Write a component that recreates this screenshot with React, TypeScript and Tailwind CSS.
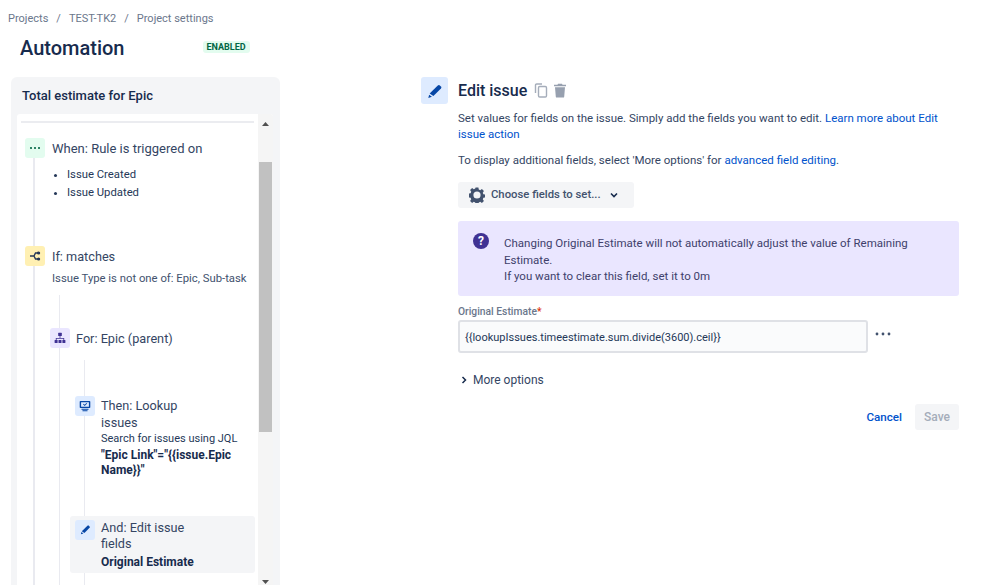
import React from "react";

const Pencil = ({ size = 14, color = "#0747a6" }: { size?: number; color?: string }) => (
  <svg width={size} height={size} viewBox="0 0 24 24" fill={color}>
    <path d="M16.2 3.6a2.2 2.2 0 0 1 3.1 0l1.6 1.6a2.2 2.2 0 0 1 0 3.1L9.6 19.6 4 15.8z" />
    <path d="M3.2 17.6 7.4 20.8 2 22.4z" />
  </svg>
);

const Chevron = ({ className }: { className?: string }) => (
  <svg className={className} width="10" height="10" viewBox="0 0 10 10" fill="none" stroke="#172b4d" strokeWidth="1.6">
    <path d="M2 3.5 5 6.5 8 3.5" />
  </svg>
);

function IconTile({ bg, children }: { bg: string; children: React.ReactNode }) {
  return (
    <div className={`flex h-5 w-5 shrink-0 items-center justify-center rounded-[3px] ${bg}`}>{children}</div>
  );
}

function Gear() {
  return (
    <svg width="16" height="16" viewBox="0 0 16 16" fill="#42526e">
      <path
        fillRule="evenodd"
        d="M6.6.6h2.800l.4 2 1.400.6 1.700-1.100 2 2-1.100 1.700.6 1.400 2 .4v2.800l-2 .4-.6 1.400 1.100 1.700-2 2-1.700-1.100-1.400.6-.4 2H6.600l-.4-2-1.400-.6-1.700 1.100-2-2 1.100-1.700-.6-1.400-2-.4V6.600l2-.4.6-1.400-1.100-1.700 2-2 1.700 1.100 1.400-.6zM8 4.400a3.600 3.600 0 1 0 0 7.200 3.600 3.600 0 0 0 0-7.200z"
      />
    </svg>
  );
}

function RuleTree() {
  return (
    <div className="relative pl-2 pt-[15px] text-[#253858]">
      <div className="absolute left-[16px] top-[35px] h-[500px] w-[2px] bg-[#e9eaf0]" />
      <div className="relative flex h-5 items-center gap-[7px]">
        <IconTile bg="bg-[#e3fcef]">
          <svg width="12" height="4" viewBox="0 0 12 4" fill="#006644">
            <circle cx="2" cy="2" r="1.1" />
            <circle cx="6" cy="2" r="1.1" />
            <circle cx="10" cy="2" r="1.1" />
          </svg>
        </IconTile>
        <span className="mt-[2px] text-[13px] text-[#344563]">When: Rule is triggered on</span>
      </div>
      <ul className="relative mt-[8px] ml-[27px] list-disc pl-0 text-[11.3px] leading-[18px] text-[#253858]">
        <li className="ml-[15px] pl-0">Issue Created</li>
        <li className="ml-[15px] pl-0">Issue Updated</li>
      </ul>
      <div className="relative mt-[44px] flex h-5 items-center gap-[7px]">
        <IconTile bg="bg-[#fff0b3]">
          <svg width="12" height="12" viewBox="0 0 12 12" fill="none" stroke="#253858" strokeWidth="1.4">
            <path d="M1 6h4M9 3H6.5L5 6l1.5 3H9" />
            <circle cx="9.6" cy="3" r="0.9" fill="#253858" />
            <circle cx="9.6" cy="9" r="0.9" fill="#253858" />
          </svg>
        </IconTile>
        <span className="mt-[2px] text-[12.7px] text-[#344563]">If: matches</span>
      </div>
      <p className="relative mt-[4px] ml-[27px] whitespace-nowrap text-[11.3px] leading-[18px] text-[#42526e]">
        Issue Type is not one of: Epic, Sub-task
      </p>
      <div className="relative ml-[25px] mt-[40px]">
        <div className="absolute left-[9px] top-[-33px] h-[300px] w-[1px] bg-[#e9eaf0]" />
        <div className="relative flex h-5 items-center gap-[6px]">
          <IconTile bg="bg-[#eae6ff]">
            <svg width="12" height="12" viewBox="0 0 12 12" fill="#403294">
              <rect x="4.2" y="0.8" width="3.6" height="3.2" rx="0.5" />
              <rect x="0.6" y="8" width="3" height="3" rx="0.5" />
              <rect x="4.5" y="8" width="3" height="3" rx="0.5" />
              <rect x="8.4" y="8" width="3" height="3" rx="0.5" />
              <path d="M5.6 4h.8v2h3.8v2h-.8V6.8H2.6V8h-.8V6h3.8z" />
            </svg>
          </IconTile>
          <span className="mt-[2px] text-[12.7px] text-[#344563]">For: Epic (parent)</span>
        </div>
        <div className="relative ml-[25px] mt-[48px]">
          <div className="absolute left-[9px] top-[-36px] h-[300px] w-[1px] bg-[#e9eaf0]" />
          <div className="relative flex items-start gap-[6px]">
            <IconTile bg="bg-[#deebff]">
              <svg width="12" height="12" viewBox="0 0 12 12" fill="#0747a6">
                <path d="M1.5 1h9a.8.8 0 0 1 .8.8v5.4a.8.8 0 0 1-.8.8h-9a.8.8 0 0 1-.8-.8V1.800A.8.8 0 0 1 1.500 1zm.6 1.300v4.400h7.800V2.300z" />
                <path d="M4 4.300l.7-.6 1 1 1.800-1.800.7.600-2.500 2.500zM2.500 8.800h7v1h-7zM3.500 10.300h5v1h-5z" />
              </svg>
            </IconTile>
            <div className="mt-[1px] w-[140px]">
              <div className="text-[12.7px] leading-[17px] text-[#344563]">
                Then: Lookup
                <br />
                issues
              </div>
              <div className="whitespace-nowrap text-[11px] leading-[15.5px] text-[#253858]">Search for issues using JQL</div>
              <div className="mt-[1px] text-[12px] font-bold leading-[15.5px] text-[#172b4d]">
                {'"Epic Link"="{{issue.Epic Name}}"'}
              </div>
            </div>
          </div>
          <div className="relative ml-[-5px] mt-[37px] flex h-[57px] w-[185px] items-start gap-[6px] rounded-[3px] bg-[#f4f5f7] pl-[5px] pt-[4px]">
            <IconTile bg="bg-[#deebff]">
              <Pencil size={11} />
            </IconTile>
            <div className="w-[100px]">
              <div className="text-[12.7px] leading-[16px] text-[#344563]">
                And: Edit issue
                <br />
                fields
              </div>
              <div className="mt-[2px] whitespace-nowrap text-[12px] font-bold leading-[16px] text-[#172b4d]">Original Estimate</div>
            </div>
          </div>
          <div className="relative mt-[6px] h-px" />
        </div>
      </div>
    </div>
  );
}

function Scrollbar() {
  return (
    <div className="flex w-[15px] shrink-0 flex-col items-center bg-[#f5f5f5]">
      <div className="flex h-[48px] w-full justify-center pt-[8px]">
        <svg width="7" height="4" viewBox="0 0 7 4" fill="#505050">
          <path d="M3.500 0 7 4H0z" />
        </svg>
      </div>
      <div className="h-[270px] w-[13px] bg-[#c1c1c1]" />
      <div className="flex grow items-end justify-center pb-[1px]">
        <svg width="7" height="4" viewBox="0 0 7 4" fill="#505050">
          <path d="M0 0h7L3.500 4z" />
        </svg>
      </div>
    </div>
  );
}

function LeftColumn() {
  return (
    <div className="flex w-[269px] shrink-0 flex-col overflow-hidden rounded-t-[6px] bg-[#f4f5f7] pl-[6px] pr-[7px]">
      <h2 className="pl-[5px] pt-[10px] text-[13px] font-medium leading-[18px] text-[#172b4d]">Total estimate for Epic</h2>
      <div className="mt-[9px] flex min-h-0 grow overflow-hidden rounded-t-[3px] bg-white">
        <div className="min-w-0 grow overflow-hidden pt-[7px]">
          <div className="mx-1 h-[2px] bg-[#ebecf0]" />
          <RuleTree />
        </div>
        <Scrollbar />
      </div>
    </div>
  );
}

function RightColumn() {
  return (
    <div className="ml-[141px] w-[538px] shrink-0 text-[11.5px] text-[#344563]">
      <div className="flex h-[27px] items-center">
        <div className="flex h-[27px] w-[27px] items-center justify-center rounded-[3px] bg-[#deebff]">
          <Pencil size={16} />
        </div>
        <h1 className="ml-[10px] text-[16px] font-medium text-[#172b4d]">Edit issue</h1>
        <svg className="ml-[7px]" width="14" height="15" viewBox="0 0 14 15" fill="none" stroke="#a5adba" strokeWidth="1.4">
          <rect x="4.500" y="3.500" width="8" height="10.500" rx="1.200" />
          <path d="M1.500 10V2.200A1.200 1.200 0 0 1 2.700 1H8" />
        </svg>
        <svg className="ml-[5px]" width="14" height="15" viewBox="0 0 14 15" fill="#97a0af">
          <path d="M5 .8h4l.5 1H13v1.500H1V1.800h3.500zM2 4.300h10l-.8 9.400a1 1 0 0 1-1 .9H3.800a1 1 0 0 1-1-.9z" />
        </svg>
      </div>
      <div className="ml-[37px] w-[501px]">
        <p className="mt-[7px] leading-[15.5px]">
          Set values for fields on the issue. Simply add the fields you want to edit.{" "}
          <span className="text-[#0052cc]">Learn more about Edit issue action</span>
        </p>
        <p className="mt-[10px] leading-[16px]">
          To display additional fields, select 'More options' for{" "}
          <span className="text-[#0052cc]">advanced field editing</span>.
        </p>
        <div className="mt-[14px] flex h-[26px] w-[176px] items-center rounded-[3px] bg-[#f4f5f7] pl-[11px]">
          <Gear />
          <span className="ml-[6px] mt-[1px] text-[11.300px] font-medium text-[#42526e]">Choose fields to set...</span>
          <Chevron className="ml-[8px]" />
        </div>
        <div className="mt-[13px] flex h-[75px] rounded-[3px] bg-[#eae6ff] pl-[15px] pt-[14px]">
          <div className="mt-[-2px] flex h-4 w-4 shrink-0 items-center justify-center rounded-full bg-[#403294] text-[12px] font-bold leading-none text-white">?</div>
          <div className="ml-[15px] w-[430px] leading-[16.500px] text-[#403f6b]">
            Changing Original Estimate will not automatically adjust the value of Remaining Estimate.
            <br />
            If you want to clear this field, set it to 0m
          </div>
        </div>
        <div className="mt-[9px] text-[10.300px] font-medium leading-[14px] text-[#6b778c]">
          Original Estimate<span className="text-[#de350b]">*</span>
        </div>
        <div className="mt-[1px] flex items-start">
          <div className="flex h-[33px] w-[410px] items-center rounded-[3px] border-2 border-[#dfe1e6] bg-[#fafbfc] pl-[5px] pt-[3px] text-[11px] text-[#253858]">
            {"{{lookupIssues.timeestimate.sum.divide(3600).ceil}}"}
          </div>
          <svg className="ml-[7px] mt-[12px]" width="16" height="4" viewBox="0 0 16 4" fill="#42526e">
            <circle cx="2" cy="2" r="1.400" />
            <circle cx="8" cy="2" r="1.400" />
            <circle cx="14" cy="2" r="1.400" />
          </svg>
        </div>
        <div className="mt-[18px] flex items-center">
          <svg width="8" height="8" viewBox="0 0 8 8" fill="none" stroke="#172b4d" strokeWidth="1.500" className="ml-[2px]">
            <path d="M2.500 1 5.500 4 2.500 7" />
          </svg>
          <span className="ml-[5px] text-[12px] text-[#344563]">More options</span>
        </div>
        <div className="mt-[15px] flex items-center justify-end">
          <span className="mt-[2px] text-[11.600px] font-medium text-[#0052cc]">Cancel</span>
          <div className="ml-[13px] flex h-[26px] w-[44px] items-center justify-center rounded-[3px] bg-[#f4f5f7] text-[12px] font-medium text-[#a5adba]">Save</div>
        </div>
      </div>
    </div>
  );
}

export default function App() {
  return (
    <div className="flex h-[585px] w-[999px] flex-col overflow-hidden bg-white font-['Roboto','Open_Sans',sans-serif] text-[#172b4d]">
      <div className="flex h-[36px] items-center gap-[8px] pl-[8px] pt-[2px] text-[11px] text-[#6b778c]">
        <span>Projects</span>
        <span>/</span>
        <span>TEST-TK2</span>
        <span>/</span>
        <span>Project settings</span>
      </div>
      <div className="flex h-[41px] items-start pl-[20px]">
        <h1 className="text-[20px] font-medium leading-[24px] text-[#172b4d]">Automation</h1>
        <span className="ml-[78px] mt-[5px] rounded-[3px] bg-[#e3fcef] px-[4px] text-[9px] font-bold leading-[12px] text-[#006644]">ENABLED</span>
      </div>
      <div className="flex min-h-0 grow items-stretch pl-[11px]">
        <LeftColumn />
        <RightColumn />
      </div>
    </div>
  );
}
